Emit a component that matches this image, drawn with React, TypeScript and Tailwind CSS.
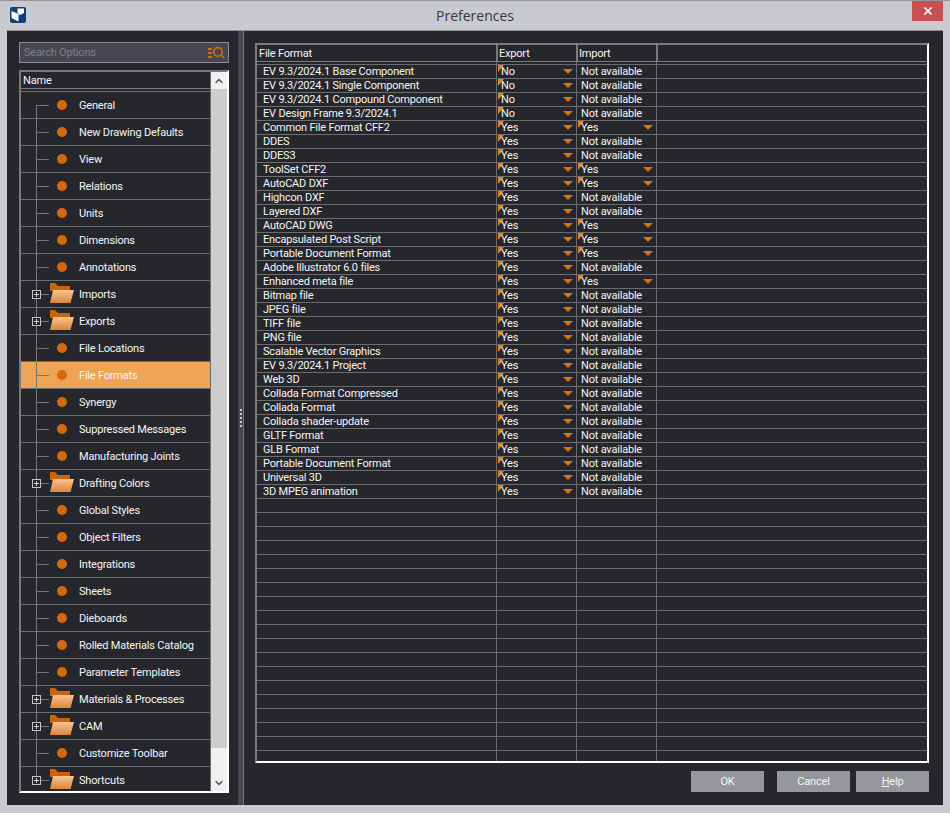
import { Search, ChevronUp, ChevronDown, X } from "lucide-react";

type TreeItem = { name: string; folder?: boolean; selected?: boolean };

const TREE: TreeItem[] = [
  { name: "General" },
  { name: "New Drawing Defaults" },
  { name: "View" },
  { name: "Relations" },
  { name: "Units" },
  { name: "Dimensions" },
  { name: "Annotations" },
  { name: "Imports", folder: true },
  { name: "Exports", folder: true },
  { name: "File Locations" },
  { name: "File Formats", selected: true },
  { name: "Synergy" },
  { name: "Suppressed Messages" },
  { name: "Manufacturing Joints" },
  { name: "Drafting Colors", folder: true },
  { name: "Global Styles" },
  { name: "Object Filters" },
  { name: "Integrations" },
  { name: "Sheets" },
  { name: "Dieboards" },
  { name: "Rolled Materials Catalog" },
  { name: "Parameter Templates" },
  { name: "Materials & Processes", folder: true },
  { name: "CAM", folder: true },
  { name: "Customize Toolbar" },
  { name: "Shortcuts", folder: true },
];

const NA = "Not available";

const FORMATS: [string, string, string][] = [
  ["EV 9.3/2024.1 Base Component", "No", NA],
  ["EV 9.3/2024.1 Single Component", "No", NA],
  ["EV 9.3/2024.1 Compound Component", "No", NA],
  ["EV Design Frame 9.3/2024.1", "No", NA],
  ["Common File Format CFF2", "Yes", "Yes"],
  ["DDES", "Yes", NA],
  ["DDES3", "Yes", NA],
  ["ToolSet CFF2", "Yes", "Yes"],
  ["AutoCAD DXF", "Yes", "Yes"],
  ["Highcon DXF", "Yes", NA],
  ["Layered DXF", "Yes", NA],
  ["AutoCAD DWG", "Yes", "Yes"],
  ["Encapsulated Post Script", "Yes", "Yes"],
  ["Portable Document Format", "Yes", "Yes"],
  ["Adobe Illustrator 6.0 files", "Yes", NA],
  ["Enhanced meta file", "Yes", "Yes"],
  ["Bitmap file", "Yes", NA],
  ["JPEG file", "Yes", NA],
  ["TIFF file", "Yes", NA],
  ["PNG file", "Yes", NA],
  ["Scalable Vector Graphics", "Yes", NA],
  ["EV 9.3/2024.1 Project", "Yes", NA],
  ["Web 3D", "Yes", NA],
  ["Collada Format Compressed", "Yes", NA],
  ["Collada Format", "Yes", NA],
  ["Collada shader-update", "Yes", NA],
  ["GLTF Format", "Yes", NA],
  ["GLB Format", "Yes", NA],
  ["Portable Document Format", "Yes", NA],
  ["Universal 3D", "Yes", NA],
  ["3D MPEG animation", "Yes", NA],
];

const EMPTY_ROWS = Array.from({ length: 19 }, (_, i) => i);

function Logo() {
  return (
    <svg width="16" height="16" viewBox="0 0 16 16" className="block">
      <rect width="16" height="16" rx="2" fill="#0b3f7d" />
      <path d="M1.5 4 L8.5 7 V14.5 L1.5 11 Z" fill="#fff" />
      <path d="M7.5 1.5 L14 1.5 V6 L10 8 L7.5 6 Z" fill="#fff" />
    </svg>
  );
}

function Folder() {
  return (
    <svg width="25" height="21" viewBox="0 0 25 21" className="block">
      <path d="M0 0 H5 L8 3 H20 V8 H0 Z" fill="#c9640a" />
      <defs>
        <linearGradient id="fold" x1="0" y1="0" x2="0" y2="1">
          <stop offset="0" stopColor="#f6c596" />
          <stop offset="1" stopColor="#dd8538" />
        </linearGradient>
      </defs>
      <path d="M3 7 H24 L20.5 20 H0 Z" fill="url(#fold)" />
    </svg>
  );
}

function Expander() {
  return (
    <span className="relative z-10 flex h-[9px] w-[9px] items-center justify-center border border-[#c4c4c4] bg-[#27282d]">
      <span className="absolute h-px w-[5px] bg-[#d4d4d4]" />
      <span className="absolute h-[5px] w-px bg-[#d4d4d4]" />
    </span>
  );
}

function TreeRow({ item, index }: { item: TreeItem; index: number }) {
  const last = index === TREE.length - 1;
  return (
    <div className={`relative flex h-[27px] items-center border-b border-[#6c6c6c] ${item.selected ? "bg-[#eea455]" : ""}`}>
      {/* tree connector */}
      <span className={`absolute left-[15px] w-px bg-[#777] ${index === 0 ? "top-[13px]" : "-top-px"} ${last ? "h-[14px]" : "bottom-[-1px]"}`} />
      <span className="absolute left-[15px] top-[13px] h-px w-[13px] bg-[#777]" />
      <span className="flex w-[28px] justify-center pl-[3px]">{item.folder && <Expander />}</span>
      <span className="flex w-[30px] justify-center">
        {item.folder ? (
          <span className="-ml-[4px] -mt-[2px]"><Folder /></span>
        ) : (
          <span className="-ml-[4px] h-[10px] w-[10px] rounded-full bg-[#d2690a]" />
        )}
      </span>
      <span className="whitespace-nowrap pt-[2px] text-[#f5f5f5]">{item.name}</span>
    </div>
  );
}

function Cell({ value, arrow }: { value: string; arrow: boolean }) {
  return (
    <div className="relative flex h-full w-[80px] items-center border-r border-[#6c6c6c] pl-[4px]">
      {arrow && <span className="absolute left-[1px] top-0 h-0 w-0 border-r-[6px] border-t-[7px] border-r-transparent border-t-[#e8832a]" />}
      <span className="relative">{value}</span>
      {arrow && <span className="absolute right-[3px] top-[4px] h-0 w-0 border-x-[5px] border-t-[5px] border-x-transparent border-t-[#d9740f]" />}
    </div>
  );
}

export default function App() {
  return (
    <div className="flex h-[813px] w-[950px] flex-col border-t border-[#96979c] bg-[#c9cace] font-['Roboto',Arial,sans-serif] text-[11px] tracking-[-0.2px] text-[#f5f5f5]">
      {/* title bar */}
      <div className="relative flex h-[29px] shrink-0 items-center justify-center">
        <span className="absolute left-[10px] top-[6px]"><Logo /></span>
        <span className="font-['Open_Sans',sans-serif] text-[14px] tracking-normal text-[#3a3a3a]">Preferences</span>
        <span className="absolute right-[7px] top-0 flex h-[20px] w-[31px] items-center justify-center bg-[#c75050]">
          <X size={12} strokeWidth={3.5} color="#fff" />
        </span>
      </div>

      <div className="mx-[7px] mb-[8px] flex min-h-0 flex-1 border-t border-[#8e8f93] bg-[#26272c]">
        {/* left pane */}
        <div className="flex w-[231px] shrink-0 flex-col gap-[7px] pl-[12px] pt-[11px]">
          <div className="flex h-[21px] w-[210px] items-center justify-between border border-[#8a8b90] bg-[#47484f] pl-[4px] pr-[3px]">
            <span className="pt-[2px] text-[#7d7e84]">Search Options</span>
            <span className="flex items-center text-[#d2690a]">
              <span className="flex flex-col gap-[2px]">
                <span className="h-[2px] w-[4px] bg-[#d2690a]" />
                <span className="h-[2px] w-[4px] bg-[#d2690a]" />
                <span className="h-[2px] w-[4px] bg-[#d2690a]" />
              </span>
              <Search size={13} strokeWidth={2.8} />
            </span>
          </div>

          <div className="flex h-[723px] w-[210px] overflow-hidden border-b-2 border-l-2 border-r-2 border-t-2 border-b-white border-l-[#7b7b7b] border-r-white border-t-[#7b7b7b]">
            <div className="min-w-0 flex-1 border-r border-[#6c6c6c]">
              <div className="flex h-[17px] items-center border-b border-[#7b7b7b] pl-[2px] pt-[2px] text-[#f5f5f5]">Name</div>
              <div className="h-[3px] border-b border-[#6c6c6c]" />
              {TREE.map((item, i) => (
                <TreeRow key={item.name} item={item} index={i} />
              ))}
            </div>
            <div className="flex w-[16px] shrink-0 flex-col bg-[#f0f0f0]">
              <div className="flex h-[17px] items-center justify-center">
                <ChevronUp size={12} strokeWidth={3} color="#555" />
              </div>
              <div className="h-[659px] bg-[#cdcdcd]" />
              <div className="flex flex-1 items-end justify-center pb-[2px]">
                <ChevronDown size={12} strokeWidth={3} color="#555" />
              </div>
            </div>
          </div>
        </div>

        {/* splitter */}
        <div className="flex w-[6px] shrink-0 flex-col items-center justify-center gap-[2px] border-r border-[#77787e] bg-[#46474f]">
          {[0, 1, 2, 3, 4].map((d) => (
            <span key={d} className="h-[2px] w-[2px] bg-[#c8c8c8]" />
          ))}
        </div>

        {/* right pane */}
        <div className="flex min-w-0 flex-1 flex-col pl-[11px] pr-[14px] pt-[12px]">
          <div className="h-[720px] overflow-hidden border-b-2 border-l-2 border-r-2 border-t-2 border-b-white border-l-[#7b7b7b] border-r-white border-t-[#7b7b7b]">
            <div className="flex h-[17px] border-b border-[#7b7b7b]">
              <div className="flex w-[241px] items-center border-r-2 border-[#7b7b7b] pl-[2px] pt-[2px]">File Format</div>
              <div className="flex w-[80px] items-center border-r-2 border-[#7b7b7b] pl-[1px] pt-[2px]">Export</div>
              <div className="flex w-[80px] items-center border-r-2 border-[#7b7b7b] pl-[1px] pt-[2px]">Import</div>
            </div>
            <div className="flex h-[3px] border-b border-[#6c6c6c]">
              <div className="w-[240px] border-r border-[#6c6c6c]" />
              <div className="w-[80px] border-r border-[#6c6c6c]" />
              <div className="w-[80px] border-r border-[#6c6c6c]" />
            </div>
            {FORMATS.map(([name, exp, imp], i) => (
              <div key={i} className="flex h-[14px] items-center border-b border-[#6c6c6c] leading-[13px]">
                <div className="flex h-full w-[240px] items-center border-r border-[#6c6c6c] pl-[6px]">{name}</div>
                <Cell value={exp} arrow />
                <Cell value={imp} arrow={imp !== NA} />
              </div>
            ))}
            {EMPTY_ROWS.map((i) => (
              <div key={i} className="flex h-[14px] border-b border-[#6c6c6c]">
                <div className="w-[240px] border-r border-[#6c6c6c]" />
                <div className="w-[80px] border-r border-[#6c6c6c]" />
                <div className="w-[80px] border-r border-[#6c6c6c]" />
              </div>
            ))}
          </div>

          <div className="mt-[8px] flex justify-end">
            <button className="h-[21px] w-[73px] bg-[#96979c] pt-[2px] text-[#f5f5f5]">OK</button>
            <button className="ml-[13px] h-[21px] w-[73px] bg-[#96979c] pt-[2px] text-[#f5f5f5]">Cancel</button>
            <button className="ml-[6px] h-[21px] w-[73px] bg-[#96979c] pt-[2px] text-[#f5f5f5]"><span className="underline">H</span>elp</button>
          </div>
        </div>
      </div>
    </div>
  );
}
